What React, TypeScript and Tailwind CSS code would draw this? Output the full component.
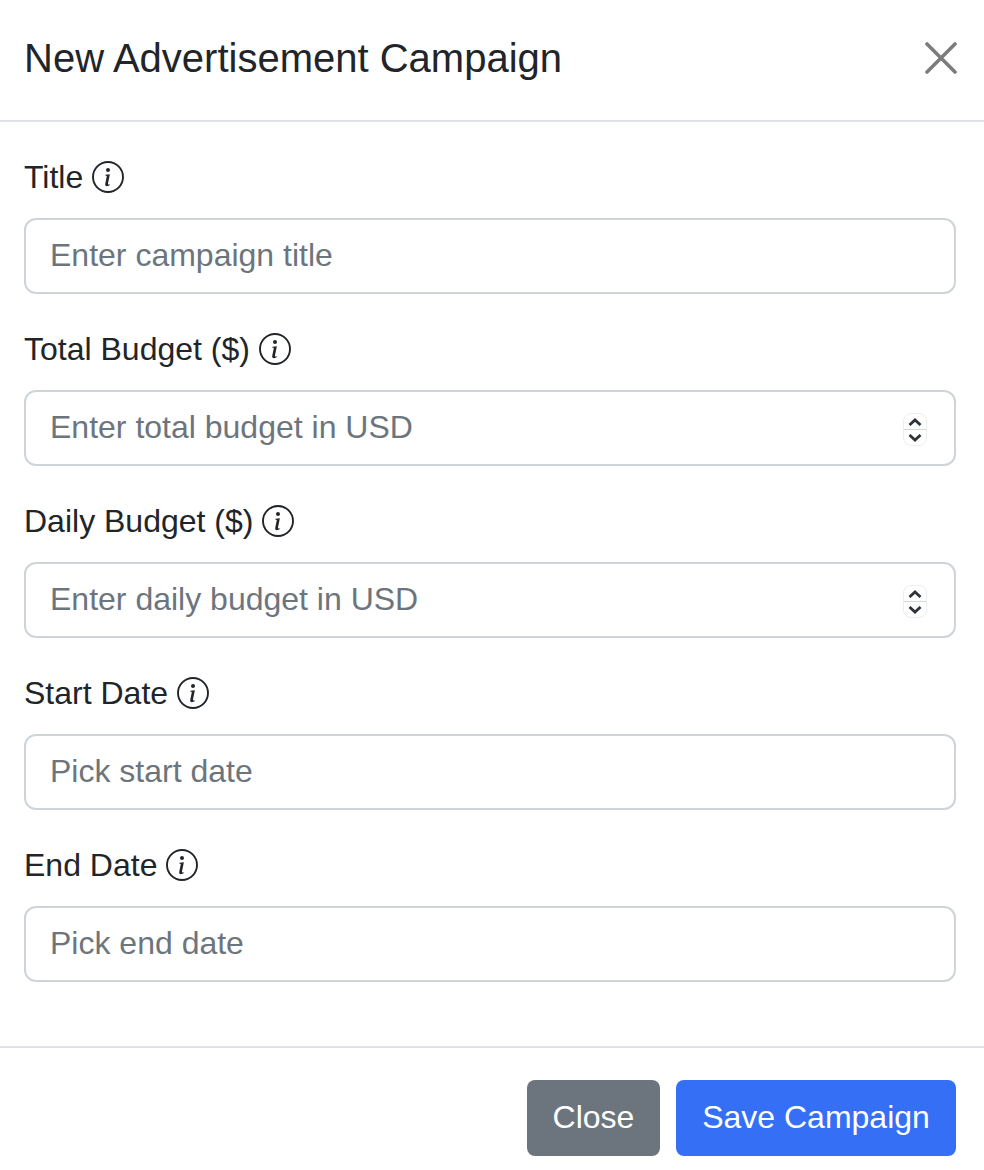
const font = { fontFamily: '"Liberation Sans", Arial, sans-serif' };

function InfoIcon() {
  return (
    <svg viewBox="0 0 32 32" className="ml-[9px] h-8 w-8 shrink-0 text-[#212529]">
      <circle cx="16" cy="16" r="15" fill="none" stroke="currentColor" strokeWidth="1.9" />
      <path
        fill="currentColor"
        d="M17.86 13.18l-4.4.55-.16.76.86.16c.58.14.7.35.58.94l-1.44 6.94c-.38 1.79.2 2.63 1.58 2.63 1.06 0 2.3-.5 2.86-1.2l.17-.83c-.39.35-.96.49-1.34.49-.54 0-.73-.39-.59-1.07zM18 9a2 2 0 1 1-4 0 2 2 0 0 1 4 0z"
      />
    </svg>
  );
}

function Spinner() {
  return (
    <div className="absolute right-[27px] top-[21px] flex h-[33px] w-[24px] flex-col overflow-hidden rounded-[8px] border border-[#eceeef] bg-white">
      <div className="flex flex-1 items-center justify-center border-b border-[#d5d8db]">
        <svg viewBox="0 0 14 8" className="h-[8px] w-[14px]" fill="none" stroke="#2f3438" strokeWidth="2.8">
          <path d="M1.5 7L7 2l5.5 5" />
        </svg>
      </div>
      <div className="flex flex-1 items-center justify-center">
        <svg viewBox="0 0 14 8" className="h-[8px] w-[14px]" fill="none" stroke="#2f3438" strokeWidth="2.8">
          <path d="M1.5 1L7 6l5.5-5" />
        </svg>
      </div>
    </div>
  );
}

function Field({ label, placeholder, number }: { label: string; placeholder: string; number?: boolean }) {
  return (
    <div className="mb-[32px]">
      <div className="mb-[18px] flex h-[46px] items-center text-[32px] leading-[46px] text-[#212529]">
        <span>{label}</span>
        <InfoIcon />
      </div>
      <div className="relative flex h-[76px] items-center rounded-[12px] border-2 border-[#ced4da] bg-white pb-[2px] pl-[24px] text-[32px] text-[#6c757d]">
        {placeholder}
        {number && <Spinner />}
      </div>
    </div>
  );
}

export default function App() {
  return (
    <div style={font} className="h-[1170px] w-[984px] overflow-hidden bg-white">
      <div className="flex h-[122px] items-center justify-between border-b-2 border-[#dee2e6] pb-[4px] pl-[24px] pr-[27px]">
        <h5 className="text-[40px] leading-none text-[#212529]">New Advertisement Campaign</h5>
        <svg viewBox="0 0 32 32" className="h-[32px] w-[32px]" fill="none" stroke="#7c7c7c" strokeWidth="3.6" strokeLinecap="round">
          <path d="M2 2l28 28M30 2L2 30" />
        </svg>
      </div>
      <div className="h-[924px] px-[28px] pt-[32px] pl-[24px]">
        <Field label="Title" placeholder="Enter campaign title" />
        <Field label="Total Budget ($)" placeholder="Enter total budget in USD" number />
        <Field label="Daily Budget ($)" placeholder="Enter daily budget in USD" number />
        <Field label="Start Date" placeholder="Pick start date" />
        <Field label="End Date" placeholder="Pick end date" />
      </div>
      <div className="flex justify-end gap-[16px] border-t-2 border-[#dee2e6] pr-[28px] pt-[32px]">
        <button className="h-[76px] w-[133px] rounded-[8px] bg-[#6c757d] pb-[2px] text-[32px] text-white">Close</button>
        <button className="h-[76px] w-[280px] rounded-[8px] bg-[#356ff5] pb-[2px] text-[32px] text-white">Save Campaign</button>
      </div>
    </div>
  );
}
